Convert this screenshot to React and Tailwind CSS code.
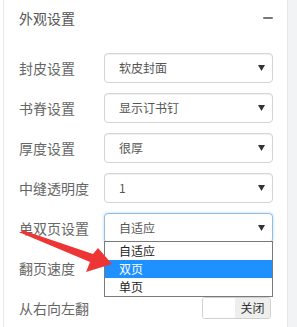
import React from 'react';

const rows = [
  { label: '封皮设置', value: '软皮封面' },
  { label: '书脊设置', value: '显示订书钉' },
  { label: '厚度设置', value: '很厚' },
  { label: '中缝透明度', value: '1' },
  { label: '单双页设置', value: '自适应', focused: true },
  { label: '翻页速度', value: '' },
];

const options = ['自适应', '双页', '单页'];

const Caret = () => (
  <svg width="7" height="6" viewBox="0 0 7 6">
    <polygon points="0,0 7,0 3.5,6" fill="#333" />
  </svg>
);

const Select = ({ value, focused }) => (
  <div
    className={`w-[169px] h-[30px] flex items-center justify-between pl-[14px] pr-[7px] rounded-[4px] border bg-white text-[12px] text-[#555] ${
      focused ? 'border-[#8fbde6] shadow-[0_0_3px_rgba(102,175,233,0.5)]' : 'border-[#d4d4d4] shadow-[inset_0_1px_1px_rgba(0,0,0,0.06)]'
    }`}
  >
    <span>{value}</span>
    <Caret />
  </div>
);

export default function App() {
  return (
    <div
      className="w-[297px] h-[327px] flex bg-white overflow-hidden"
      style={{ fontFamily: '"Microsoft YaHei", "Noto Sans CJK SC", "Noto Sans", sans-serif' }}
    >
      <div className="ml-[3px] w-[285px] border-l border-r border-[#e8e8e8] relative">
        {/* header */}
        <div className="h-[36px] flex items-center justify-between pl-[15px] pr-[14px]">
          <span className="text-[14px] text-[#555]">外观设置</span>
          <span className="w-[10px] h-[2px] bg-[#777] rounded-full"></span>
        </div>

        {/* form rows */}
        <div className="pt-[17px] flex flex-col gap-[10px] pl-[15px]">
          {rows.map((r) => (
            <div key={r.label} className="flex items-center h-[30px]">
              <span className="w-[85px] text-[14px] text-[#666]">{r.label}</span>
              <Select value={r.value} focused={r.focused} />
            </div>
          ))}
          <div className="flex items-center justify-between h-[30px] pr-[16px]">
            <span className="text-[14px] text-[#666]">从右向左翻</span>
            <div className="w-[69px] h-[22px] flex rounded-[3px] border border-[#d0d0d0] overflow-hidden text-[12px] text-[#333]">
              <span className="flex-1 bg-white"></span>
              <span className="w-[35px] bg-[#eeeeee] flex items-center justify-center">关闭</span>
            </div>
          </div>
        </div>

        {/* open dropdown list */}
        <div className="absolute left-[100px] top-[241px] w-[169px] border border-[#7a7a7a] bg-white text-[12px] text-[#222]">
          {options.map((o) => (
            <div
              key={o}
              className={`h-[18px] flex items-center pl-[14px] ${o === '双页' ? 'bg-[#1e90ff] text-white' : ''}`}
            >
              {o}
            </div>
          ))}
        </div>

        {/* red arrow annotation */}
        <svg className="absolute left-[-4px] top-0 pointer-events-none" width="297" height="327" viewBox="0 0 297 327">
          <polygon
            points="22,230 93,254 98,248 112,264 86,272 90,262 21,233"
            fill="#ee3535"
          />
        </svg>
      </div>
      <div className="flex-1 bg-[#f1f3f5]"></div>
    </div>
  );
}
